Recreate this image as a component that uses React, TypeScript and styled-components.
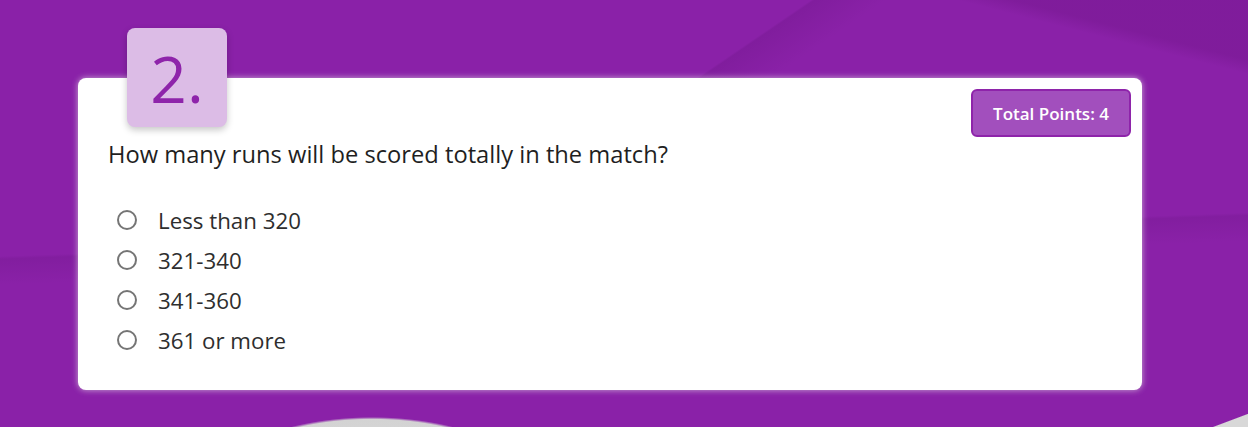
import React from "react";
import styled, { createGlobalStyle } from "styled-components";

const GlobalStyle = createGlobalStyle`
  html, body {
    margin: 0;
    padding: 0;
    background: #ffffff;
    font-family: "Open Sans", "Noto Sans", Arial, sans-serif;
  }
  * { box-sizing: border-box; }
`;

const Stage = styled.section`
  height: 427px;
  width: 1248px;
  padding: 78px 106px 0 78px;
  background-color: #8a21a8;
  background-image:
    radial-gradient(ellipse 170px 80px at 372px 497px, #dedede 0%, #d3d3d3 97%, rgba(211, 211, 211, 0) 100%),
    linear-gradient(159.4deg, rgba(216, 216, 216, 0) 826px, #d8d8d8 827px),
    linear-gradient(14.3deg, rgba(90, 10, 110, 0) 650px, rgba(90, 10, 110, 0.22) 664px),
    linear-gradient(145.7deg, rgba(60, 0, 80, 0) 457px, rgba(60, 0, 80, 0.12) 459px, rgba(60, 0, 80, 0) 500px),
    linear-gradient(178deg, rgba(60, 0, 80, 0) 256px, rgba(60, 0, 80, 0.1) 259px, rgba(60, 0, 80, 0) 285px);
  background-size: 100% 100%, 100% 100%, 100% 100%, 1248px 80px, 100% 100%;
  background-repeat: no-repeat;
`;

const Card = styled.article`
  height: 312px;
  background: #ffffff;
  border-radius: 8px;
  padding: 0 11px 0 30px;
  box-shadow: 0 0 6px rgba(225, 215, 230, 0.75);
`;

const Header = styled.div`
  display: flex;
  justify-content: space-between;
  align-items: flex-start;
`;

const NumberBadge = styled.div`
  width: 100px;
  height: 99px;
  margin: -50px 0 0 19px;
  border-radius: 8px;
  background: #dcbce6;
  box-shadow: 0 3px 7px rgba(0, 0, 0, 0.22);
  display: flex;
  align-items: center;
  justify-content: center;
  color: #8e24aa;
  font-size: 64px;
  font-weight: 500;
  line-height: 1;
  padding-top: 2px;
`;

const PointsButton = styled.button`
  margin-top: 11px;
  width: 160px;
  height: 48px;
  border: 2px solid #8e24aa;
  border-radius: 6px;
  background: #a24fbd;
  color: #ffffff;
  font-family: "Open Sans", "Noto Sans", Arial, sans-serif;
  font-weight: 600;
  font-size: 17px;
  cursor: pointer;
`;

const Question = styled.h2`
  margin: 1px 0 0 0;
  font-size: 23.7px;
  line-height: 32px;
  font-weight: 400;
  color: #1f1f1f;
`;

const Options = styled.ul`
  list-style: none;
  margin: 30px 0 0 9px;
  padding: 0;
`;

const Option = styled.li`
  display: flex;
  align-items: center;
  height: 40px;
  gap: 21px;
  font-size: 22.3px;
  color: #2e2e2e;
`;

const Radio = styled.span`
  width: 20px;
  height: 20px;
  border-radius: 50%;
  border: 2px solid #757575;
  flex: none;
`;

const options = ["Less than 320", "321-340", "341-360", "361 or more"];

export default function App() {
  return (
    <>
      <GlobalStyle />
      <Stage>
        <Card>
          <Header>
            <NumberBadge>2.</NumberBadge>
            <PointsButton>Total Points: 4</PointsButton>
          </Header>
          <Question>How many runs will be scored totally in the match?</Question>
          <Options>
            {options.map((o) => (
              <Option key={o}>
                <Radio />
                {o}
              </Option>
            ))}
          </Options>
        </Card>
      </Stage>
    </>
  );
}
